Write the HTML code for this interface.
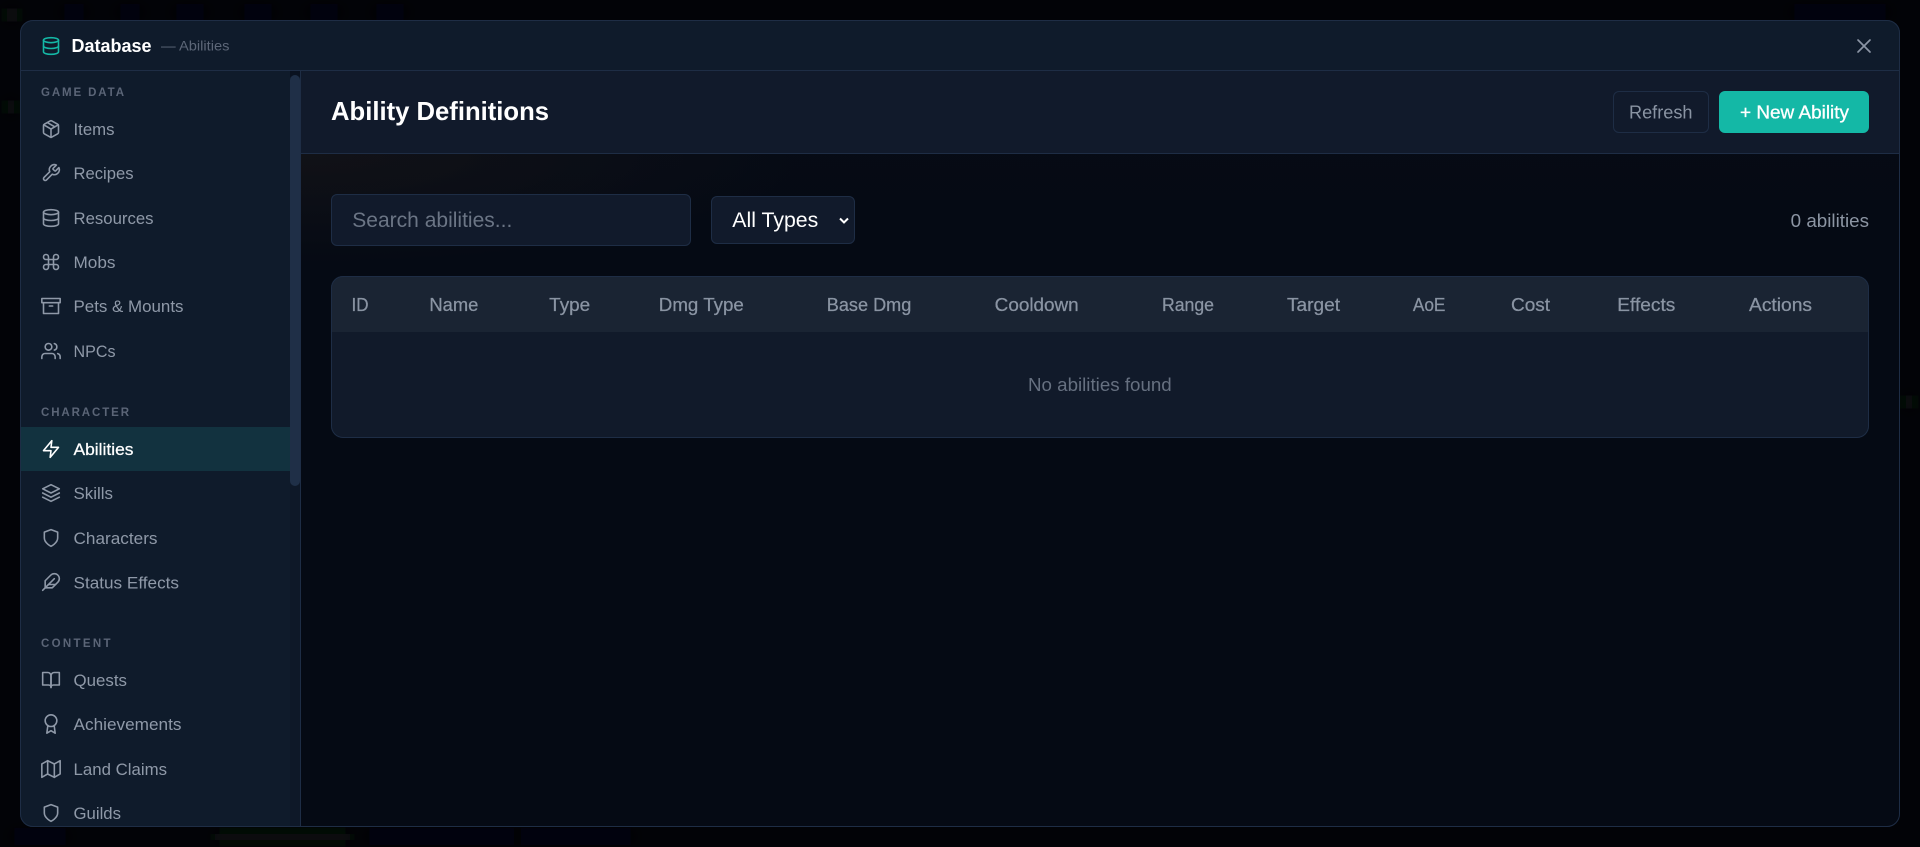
<!DOCTYPE html>
<html lang="en">
<head>
<meta charset="utf-8">
<title>Database — Abilities</title>
<style>
html,body{margin:0;padding:0;width:1920px;height:847px;overflow:hidden;background:#020307}
svg{display:block}
text{font-family:"Liberation Sans",sans-serif}
.nav{font-size:17px;fill:#8f99a8}
.grp{font-size:11.5px;font-weight:700;fill:#5b6577}
.th{font-size:18px;fill:#8a94a3;stroke:#8a94a3;stroke-width:.25}
.ic{fill:none;stroke:#8f99a8;stroke-width:1.9;stroke-linecap:round;stroke-linejoin:round}
</style>
</head>
<body>
<svg xmlns="http://www.w3.org/2000/svg" width="1920" height="847" viewBox="0 0 1920 847">
<defs>
  <filter id="bl" filterUnits="userSpaceOnUse" x="0" y="0" width="1920" height="847"><feGaussianBlur stdDeviation="7"/></filter>
  <clipPath id="modal"><rect x="20" y="20" width="1880" height="807" rx="13"/></clipPath>
  <linearGradient id="mainbg" x1="0" y1="0" x2="0" y2="1">
    <stop offset="0" stop-color="#070c16"/><stop offset=".25" stop-color="#050a14"/><stop offset="1" stop-color="#050a14"/>
  </linearGradient>
  <radialGradient id="warm" cx="0" cy="0" r="1">
    <stop offset="0" stop-color="#151418" stop-opacity=".75"/><stop offset="1" stop-color="#151418" stop-opacity="0"/>
  </radialGradient>
  <g id="i-db"><ellipse cx="12" cy="5" rx="9" ry="3"/><path d="M21 12c0 1.66-4 3-9 3s-9-1.34-9-3"/><path d="M3 5v14c0 1.66 4 3 9 3s9-1.34 9-3V5"/></g>
  <g id="i-shield"><path d="M12 22s8-4 8-10V5l-8-3-8 3v7c0 6 8 10 8 10z"/></g>
</defs>

<!-- blurred backdrop -->
<rect width="1920" height="847" fill="#020307"/>
<g filter="url(#bl)" fill="#0e0f12">
  <rect x="60" y="8" width="28" height="9"/><rect x="116" y="8" width="28" height="9"/>
  <rect x="172" y="8" width="36" height="9"/><rect x="240" y="8" width="36" height="9"/>
  <rect x="306" y="8" width="36" height="9"/><rect x="372" y="8" width="36" height="9"/>
  <rect x="10" y="832" width="60" height="9"/><rect x="365" y="832" width="150" height="9"/><rect x="520" y="832" width="115" height="9"/>
  <rect x="1790" y="8" width="100" height="9"/>
</g>
<g filter="url(#bl)" fill="#07170e">
  <rect x="215" y="832" width="135" height="10"/><rect x="6" y="8" width="12" height="14"/><rect x="6" y="100" width="10" height="14"/>
  <rect x="1904" y="395" width="10" height="14"/>
</g>

<!-- modal -->
<g clip-path="url(#modal)">
  <rect x="20" y="20" width="1880" height="807" fill="url(#mainbg)"/>
  <rect x="301" y="154" width="500" height="110" fill="url(#warm)"/>
  <!-- top bar -->
  <rect x="20" y="20" width="1880" height="51" fill="#0f1b2b"/>
  <rect x="20" y="70" width="1880" height="1" fill="#1e2d45"/>
  <!-- content header -->
  <rect x="301" y="71" width="1599" height="82" fill="#111a2b"/>
  <rect x="301" y="153" width="1599" height="1" fill="#1e2d45"/>
  <!-- sidebar -->
  <rect x="20" y="71" width="270" height="756" fill="#0f1b2b"/>
  <rect x="290" y="71" width="10" height="756" fill="#0e1828"/>
  <rect x="290" y="71" width="10" height="6" fill="#0a1220"/>
  <rect x="290" y="75" width="10" height="411" rx="5" fill="#1f2f47"/>
  <rect x="300" y="71" width="1" height="756" fill="#1e2d45"/>
  <rect x="20" y="427" width="270" height="44" fill="#12323f"/>
</g>
<rect x="20.5" y="20.5" width="1879" height="806" rx="12.5" fill="none" stroke="#1e2d45"/>

<!-- top bar content -->
<g transform="translate(41 36)" class="ic" style="stroke:#14b8a6"><g transform="scale(.8333)"><use href="#i-db"/></g></g>
<text x="71.5" y="52" font-size="18" font-weight="700" fill="#ffffff" textLength="80" lengthAdjust="spacingAndGlyphs">Database</text>
<text x="161" y="50.5" font-size="14" fill="#5d6778" textLength="68.5" lengthAdjust="spacingAndGlyphs">— Abilities</text>
<g fill="none" stroke="#8b95a5" stroke-width="1.7" stroke-linecap="round"><path d="M1858 40 1870 52M1870 40 1858 52"/></g>

<!-- sidebar groups -->
<text class="grp" x="41" y="96" textLength="83">GAME DATA</text>
<text class="grp" x="41" y="416" textLength="88">CHARACTER</text>
<text class="grp" x="41" y="647" textLength="69.5">CONTENT</text>

<!-- nav items -->
<text class="nav" x="73.5" y="135" textLength="41" lengthAdjust="spacingAndGlyphs">Items</text>
<text class="nav" x="73.5" y="179" textLength="60" lengthAdjust="spacingAndGlyphs">Recipes</text>
<text class="nav" x="73.5" y="224" textLength="80" lengthAdjust="spacingAndGlyphs">Resources</text>
<text class="nav" x="73.5" y="268" textLength="42" lengthAdjust="spacingAndGlyphs">Mobs</text>
<text class="nav" x="73.5" y="312" textLength="110" lengthAdjust="spacingAndGlyphs">Pets &amp; Mounts</text>
<text class="nav" x="73.5" y="357" textLength="42" lengthAdjust="spacingAndGlyphs">NPCs</text>
<text class="nav" x="73.5" y="455" textLength="60" lengthAdjust="spacingAndGlyphs" style="fill:#fff;stroke:#fff;stroke-width:.25">Abilities</text>
<text class="nav" x="73.5" y="499" textLength="39.5" lengthAdjust="spacingAndGlyphs">Skills</text>
<text class="nav" x="73.5" y="544" textLength="84" lengthAdjust="spacingAndGlyphs">Characters</text>
<text class="nav" x="73.5" y="588.5" textLength="105.5" lengthAdjust="spacingAndGlyphs">Status Effects</text>
<text class="nav" x="73.5" y="686" textLength="53.5" lengthAdjust="spacingAndGlyphs">Quests</text>
<text class="nav" x="73.5" y="730" textLength="108" lengthAdjust="spacingAndGlyphs">Achievements</text>
<text class="nav" x="73.5" y="775" textLength="93.5" lengthAdjust="spacingAndGlyphs">Land Claims</text>
<text class="nav" x="73.5" y="819" textLength="47.5" lengthAdjust="spacingAndGlyphs">Guilds</text>

<!-- nav icons: 24-unit feather glyphs at 20px -->
<g class="ic">
  <g transform="translate(41 119) scale(.8333)"><path d="M16.5 9.4 7.55 4.24"/><path d="M21 16V8a2 2 0 0 0-1-1.73l-7-4a2 2 0 0 0-2 0l-7 4A2 2 0 0 0 3 8v8a2 2 0 0 0 1 1.73l7 4a2 2 0 0 0 2 0l7-4A2 2 0 0 0 21 16z"/><path d="M3.27 6.96 12 12.01l8.73-5.05"/><path d="M12 22.08V12"/></g>
  <g transform="translate(41 163) scale(.8333)"><path d="M14.7 6.3a1 1 0 0 0 0 1.4l1.6 1.6a1 1 0 0 0 1.4 0l3.77-3.77a6 6 0 0 1-7.94 7.94l-6.91 6.91a2.12 2.12 0 0 1-3-3l6.91-6.91a6 6 0 0 1 7.94-7.94l-3.76 3.76z"/></g>
  <g transform="translate(41 208) scale(.8333)"><use href="#i-db"/></g>
  <g transform="translate(41 252) scale(.8333)"><path d="M18 3a3 3 0 0 0-3 3v12a3 3 0 0 0 3 3 3 3 0 0 0 3-3 3 3 0 0 0-3-3H6a3 3 0 0 0-3 3 3 3 0 0 0 3 3 3 3 0 0 0 3-3V6a3 3 0 0 0-3-3 3 3 0 0 0-3 3 3 3 0 0 0 3 3h12a3 3 0 0 0 3-3 3 3 0 0 0-3-3z"/></g>
  <g transform="translate(41 296) scale(.8333)"><path d="M21 8v13H3V8"/><rect x="1" y="3" width="22" height="5"/><path d="M10 12h4"/></g>
  <g transform="translate(41 341) scale(.8333)"><path d="M17 21v-2a4 4 0 0 0-4-4H5a4 4 0 0 0-4 4v2"/><circle cx="9" cy="7" r="4"/><path d="M23 21v-2a4 4 0 0 0-3-3.87"/><path d="M16 3.13a4 4 0 0 1 0 7.75"/></g>
  <g transform="translate(41 439) scale(.8333)" style="stroke:#fff"><path d="M13 2 3 14h9l-1 8 10-12h-9l1-8z"/></g>
  <g transform="translate(41 483) scale(.8333)"><path d="M12 2 2 7l10 5 10-5-10-5z"/><path d="m2 17 10 5 10-5"/><path d="m2 12 10 5 10-5"/></g>
  <g transform="translate(41 528) scale(.8333)"><use href="#i-shield"/></g>
  <g transform="translate(41 572) scale(.8333)"><path d="M20.24 12.24a6 6 0 0 0-8.49-8.49L5 10.5V19h8.5z"/><path d="M16 8 2 22"/><path d="M17.5 15H9"/></g>
  <g transform="translate(41 670) scale(.8333)"><path d="M2 3h6a4 4 0 0 1 4 4v14a3 3 0 0 0-3-3H2z"/><path d="M22 3h-6a4 4 0 0 0-4 4v14a3 3 0 0 1 3-3h7z"/></g>
  <g transform="translate(41 714) scale(.8333)"><circle cx="12" cy="8" r="7"/><path d="M8.21 13.89 7 23l5-3 5 3-1.21-9.12"/></g>
  <g transform="translate(41 759) scale(.8333)"><path d="M1 6v16l7-4 8 4 7-4V2l-7 4-8-4-7 4z"/><path d="M8 2v16"/><path d="M16 6v16"/></g>
  <g transform="translate(41 803) scale(.8333)"><use href="#i-shield"/></g>
</g>

<!-- content header -->
<text x="331" y="120" font-size="26" font-weight="700" fill="#fff" textLength="218" lengthAdjust="spacingAndGlyphs">Ability Definitions</text>
<rect x="1613.5" y="91.5" width="95" height="41" rx="5.5" fill="#111a2b" stroke="#1e2d45"/>
<text x="1629" y="118.5" font-size="18" fill="#8a94a3" textLength="63.5" lengthAdjust="spacingAndGlyphs">Refresh</text>
<rect x="1719" y="91" width="150" height="42" rx="6" fill="#14b8a6"/>
<text x="1740" y="118.5" font-size="18" fill="#fff" stroke="#fff" stroke-width=".3" textLength="109" lengthAdjust="spacingAndGlyphs">+ New Ability</text>

<!-- filters -->
<rect x="331.5" y="194.5" width="359" height="51" rx="5.5" fill="#111a2b" stroke="#1e2d45"/>
<text x="352.3" y="227" font-size="21.5" fill="#6b7585" textLength="160" lengthAdjust="spacingAndGlyphs">Search abilities...</text>
<rect x="711.5" y="196.5" width="143" height="47" rx="5.5" fill="#111a2b" stroke="#1e2d45"/>
<text x="732.3" y="227" font-size="21.5" fill="#fff" textLength="86" lengthAdjust="spacingAndGlyphs">All Types</text>
<path d="M840 218.5l4 4 4-4" fill="none" stroke="#fff" stroke-width="2"/>
<text x="1790.7" y="227" font-size="18" fill="#8c95a3" textLength="78.3" lengthAdjust="spacingAndGlyphs">0 abilities</text>

<!-- table -->
<clipPath id="tbl"><rect x="331" y="276" width="1538" height="162" rx="12"/></clipPath>
<g clip-path="url(#tbl)">
  <rect x="331" y="276" width="1538" height="162" fill="#111a2a"/>
  <rect x="331" y="276" width="1538" height="56" fill="#1a2433"/>
</g>
<rect x="331.5" y="276.5" width="1537" height="161" rx="11.5" fill="none" stroke="#1e2d45"/>
<text class="th" x="351.5" y="311.2" textLength="17" lengthAdjust="spacingAndGlyphs">ID</text>
<text class="th" x="429.4" y="311.2" textLength="49" lengthAdjust="spacingAndGlyphs">Name</text>
<text class="th" x="549.2" y="311.2" textLength="41" lengthAdjust="spacingAndGlyphs">Type</text>
<text class="th" x="658.8" y="311.2" textLength="85" lengthAdjust="spacingAndGlyphs">Dmg Type</text>
<text class="th" x="826.8" y="311.2" textLength="84.5" lengthAdjust="spacingAndGlyphs">Base Dmg</text>
<text class="th" x="994.7" y="311.2" textLength="84" lengthAdjust="spacingAndGlyphs">Cooldown</text>
<text class="th" x="1162" y="311.2" textLength="52" lengthAdjust="spacingAndGlyphs">Range</text>
<text class="th" x="1287" y="311.2" textLength="53" lengthAdjust="spacingAndGlyphs">Target</text>
<text class="th" x="1412.9" y="311.2" textLength="32.5" lengthAdjust="spacingAndGlyphs">AoE</text>
<text class="th" x="1511" y="311.2" textLength="39" lengthAdjust="spacingAndGlyphs">Cost</text>
<text class="th" x="1617.3" y="311.2" textLength="58" lengthAdjust="spacingAndGlyphs">Effects</text>
<text class="th" x="1749" y="311.2" textLength="63" lengthAdjust="spacingAndGlyphs">Actions</text>
<text x="1028" y="390.8" font-size="18" fill="#667080" textLength="143.7" lengthAdjust="spacingAndGlyphs">No abilities found</text>
</svg>
</body>
</html>
